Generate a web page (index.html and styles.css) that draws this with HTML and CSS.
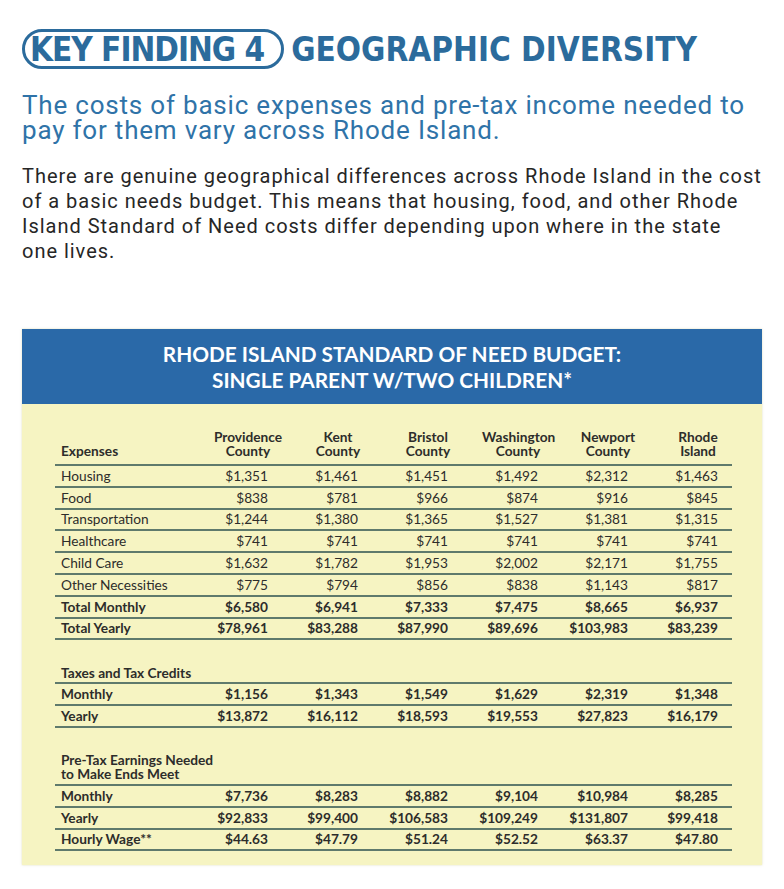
FILE: index.html
```html
<!DOCTYPE html>
<html lang="en">
<head>
<meta charset="utf-8">
<title>Key Finding 4 - Geographic Diversity</title>
<link rel="stylesheet" href="styles.css">
</head>
<body>
<main class="page">
  <header class="title-row">
    <span class="pill">KEY FINDING 4</span>
    <h1 class="title">GEOGRAPHIC DIVERSITY</h1>
  </header>
  <h2 class="subtitle">The costs of basic expenses and pre-tax income needed to<br>pay for them vary across Rhode Island.</h2>
  <p class="lead">There are genuine geographical differences across Rhode Island in the cost<br>of a basic needs budget. This means that housing, food, and other Rhode<br>Island Standard of Need costs differ depending upon where in the state<br>one lives.</p>

  <section class="card">
    <div class="card-head">RHODE ISLAND STANDARD OF NEED BUDGET:<br>SINGLE PARENT W/TWO CHILDREN*</div>
    <div class="card-body">
      <table class="budget">
        <colgroup>
          <col class="c-label"><col class="c-num"><col class="c-num"><col class="c-num"><col class="c-num"><col class="c-num"><col class="c-num">
        </colgroup>
        <thead>
          <tr class="head">
            <th class="lbl">Expenses</th>
            <th><span>Providence<br>County</span></th>
            <th><span>Kent<br>County</span></th>
            <th><span>Bristol<br>County</span></th>
            <th><span>Washington<br>County</span></th>
            <th><span>Newport<br>County</span></th>
            <th><span>Rhode<br>Island</span></th>
          </tr>
        </thead>
        <tbody>
          <tr><td>Housing</td><td>$1,351</td><td>$1,461</td><td>$1,451</td><td>$1,492</td><td>$2,312</td><td>$1,463</td></tr>
          <tr><td>Food</td><td>$838</td><td>$781</td><td>$966</td><td>$874</td><td>$916</td><td>$845</td></tr>
          <tr><td>Transportation</td><td>$1,244</td><td>$1,380</td><td>$1,365</td><td>$1,527</td><td>$1,381</td><td>$1,315</td></tr>
          <tr><td>Healthcare</td><td>$741</td><td>$741</td><td>$741</td><td>$741</td><td>$741</td><td>$741</td></tr>
          <tr><td>Child Care</td><td>$1,632</td><td>$1,782</td><td>$1,953</td><td>$2,002</td><td>$2,171</td><td>$1,755</td></tr>
          <tr><td>Other Necessities</td><td>$775</td><td>$794</td><td>$856</td><td>$838</td><td>$1,143</td><td>$817</td></tr>
          <tr class="bold"><td>Total Monthly</td><td>$6,580</td><td>$6,941</td><td>$7,333</td><td>$7,475</td><td>$8,665</td><td>$6,937</td></tr>
          <tr class="bold"><td>Total Yearly</td><td>$78,961</td><td>$83,288</td><td>$87,990</td><td>$89,696</td><td>$103,983</td><td>$83,239</td></tr>
          <tr class="section"><td colspan="7">Taxes and Tax Credits</td></tr>
          <tr class="bold"><td>Monthly</td><td>$1,156</td><td>$1,343</td><td>$1,549</td><td>$1,629</td><td>$2,319</td><td>$1,348</td></tr>
          <tr class="bold"><td>Yearly</td><td>$13,872</td><td>$16,112</td><td>$18,593</td><td>$19,553</td><td>$27,823</td><td>$16,179</td></tr>
          <tr class="section tall"><td colspan="7">Pre-Tax Earnings Needed<br>to Make Ends Meet</td></tr>
          <tr class="bold"><td>Monthly</td><td>$7,736</td><td>$8,283</td><td>$8,882</td><td>$9,104</td><td>$10,984</td><td>$8,285</td></tr>
          <tr class="bold"><td>Yearly</td><td>$92,833</td><td>$99,400</td><td>$106,583</td><td>$109,249</td><td>$131,807</td><td>$99,418</td></tr>
          <tr class="bold"><td>Hourly Wage**</td><td>$44.63</td><td>$47.79</td><td>$51.24</td><td>$52.52</td><td>$63.37</td><td>$47.80</td></tr>
        </tbody>
      </table>
    </div>
  </section>
</main>
</body>
</html>
```

FILE: styles.css
```css
* { box-sizing: border-box; }
html, body { margin: 0; padding: 0; background: #ffffff; }
body { width: 784px; height: 889px; overflow: hidden; }

.page {
  padding: 29px 22px 0 22px;
}

.title-row {
  display: flex;
  align-items: center;
  gap: 7px;
  height: 40px;
  color: #2b6b9c;
  font-family: "DejaVu Sans Condensed", "Roboto", sans-serif;
  font-weight: 700;
  font-size: 33px;
}
.pill {
  display: flex;
  align-items: center;
  height: 40px;
  padding: 0 17px 0 5px;
  border: 3px solid #2b6b9c;
  border-radius: 20px;
  line-height: 1;
  letter-spacing: -1px;
}
.title {
  margin: 0;
  font: inherit;
  line-height: 1;
}

.subtitle {
  margin: 24px 0 0 0;
  width: 780px;
  white-space: nowrap;
  font-family: "Roboto", "Liberation Sans", sans-serif;
  font-weight: 400;
  font-size: 26px;
  letter-spacing: 0.8px;
  line-height: 25px;
  color: #2f73a8;
}

.lead {
  margin: 21px 0 0 0;
  width: 780px;
  white-space: nowrap;
  font-family: "Roboto", "Liberation Sans", sans-serif;
  font-size: 20px;
  letter-spacing: 0.98px;
  line-height: 25px;
  color: #262626;
}

.card {
  margin-top: 65px;
  width: 740px;
  box-shadow: 0 0 2px rgba(200, 196, 140, 0.6);
}
.card-head {
  height: 75px;
  background: #2a69a8;
  color: #ffffff;
  display: flex;
  align-items: center;
  justify-content: center;
  text-align: center;
  font-family: "Lato", "Open Sans", sans-serif;
  font-weight: 700;
  font-size: 20.8px;
  line-height: 26px;
}
.card-body {
  background: #f6f4c2;
  padding: 26px 30px 14px 33px;
}

.budget {
  border-collapse: collapse;
  table-layout: fixed;
  width: 677px;
  font-family: "Lato", "Open Sans", sans-serif;
  font-size: 13.7px;
  color: #2d2d2b;
}
.c-label { width: 137px; }
.c-num { width: 90px; }

.budget th,
.budget td {
  padding: 0 14px 0 6px;
  text-align: right;
  white-space: nowrap;
  border-bottom: 2px solid #5f7a6c;
}
.budget td:first-child,
.budget th.lbl {
  text-align: left;
  padding-left: 6px;
}
.budget tbody td { height: 21.8px; line-height: 18px; }

.budget thead th {
  font-weight: 700;
  line-height: 14px;
  vertical-align: bottom;
  padding-bottom: 6px;
  padding-top: 0;
}
.budget thead th span {
  display: block;
  margin-left: 14px;
  margin-right: -16px;
  text-align: center;
}
.budget tr.bold td { font-weight: 700; }

.budget tr.section td {
  font-weight: 700;
  height: 44px;
  vertical-align: bottom;
  padding-bottom: 2px;
  line-height: 14px;
}
.budget tr.section.tall td { height: 58px; line-height: 14px; padding-bottom: 3px; }
```
